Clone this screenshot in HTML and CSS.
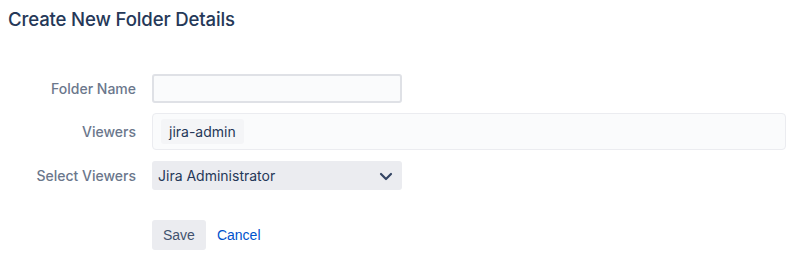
FILE: index.html
```html
<!DOCTYPE html>
<html>
<head>
<meta charset="utf-8">
<link rel="stylesheet" href="styles.css">
</head>
<body>
<h1 class="title">Create New Folder Details</h1>
<form class="form">
  <div class="row row-name">
    <label class="label" for="fname">Folder Name</label>
    <input id="fname" class="text-input" type="text">
  </div>
  <div class="row row-viewers">
    <div class="label">Viewers</div>
    <div class="viewers"><span class="tag">jira-admin</span></div>
  </div>
  <div class="row row-select">
    <div class="label">Select Viewers</div>
    <div class="select">
      <span>Jira Administrator</span>
      <svg class="chev" width="24" height="24" viewBox="0 0 24 24"><path d="M7 10l5 5 5-5" fill="none" stroke="#344563" stroke-width="2.2" stroke-linecap="round" stroke-linejoin="round"/></svg>
    </div>
  </div>
  <div class="row row-actions">
    <div class="label"></div>
    <div class="actions">
      <button type="button" class="btn">Save</button>
      <a class="link" href="#">Cancel</a>
    </div>
  </div>
</form>
</body>
</html>
```
FILE: styles.css
```css
html, body { background: #fff; }
body {
  margin: 0;
  padding: 0 12px 0 8px;
  font-family: Inter, "Liberation Sans", sans-serif;
  font-size: 14px;
  color: #172b4d;
}
.title {
  margin: 0;
  padding-top: 7px;
  font-size: 18.6px;
  line-height: 24px;
  font-weight: 500;
  color: #253858;
  letter-spacing: -0.15px;
}
.form {
  margin-top: 43px;
  display: flex;
  flex-direction: column;
}
.row {
  display: flex;
  align-items: center;
  gap: 16px;
}
.row-viewers { margin-top: 10px; }
.row-select { margin-top: 11px; }
.row-actions { margin-top: 30px; }
.label {
  flex: 0 0 128px;
  text-align: right;
  color: #6b778c;
  font-weight: 450;
  font-size: 14px;
}
.text-input {
  box-sizing: border-box;
  width: 250px;
  height: 29px;
  margin: 0;
  border: 2px solid #dfe1e6;
  border-radius: 3px;
  background: #fafbfc;
  outline: none;
}
.viewers {
  box-sizing: border-box;
  flex: 1;
  height: 37px;
  border: 1px solid #ebecf0;
  border-radius: 4px;
  background: #fafbfc;
  display: flex;
  align-items: center;
  padding-left: 8px;
}
.tag {
  background: #f4f5f7;
  border-radius: 3px;
  padding: 3px 8px 2px;
  line-height: 20px;
  color: #253858;
  font-size: 14px;
}
.select {
  box-sizing: border-box;
  width: 250px;
  height: 29px;
  background: #ebecf0;
  border-radius: 3px;
  display: flex;
  align-items: center;
  justify-content: space-between;
  padding: 0 4px 0 6px;
  color: #253858;
}
.chev { display: block; }
.actions {
  display: flex;
  align-items: center;
  gap: 11px;
}
.btn {
  height: 30px;
  padding: 0 11px;
  border: none;
  border-radius: 3px;
  background: #ebecf0;
  color: #42526e;
  font-family: "Liberation Sans", Arial, sans-serif;
  font-size: 14px;
}
.link {
  color: #0052cc;
  text-decoration: none;
  font-family: "Liberation Sans", Arial, sans-serif;
  font-size: 14px;
}
```
